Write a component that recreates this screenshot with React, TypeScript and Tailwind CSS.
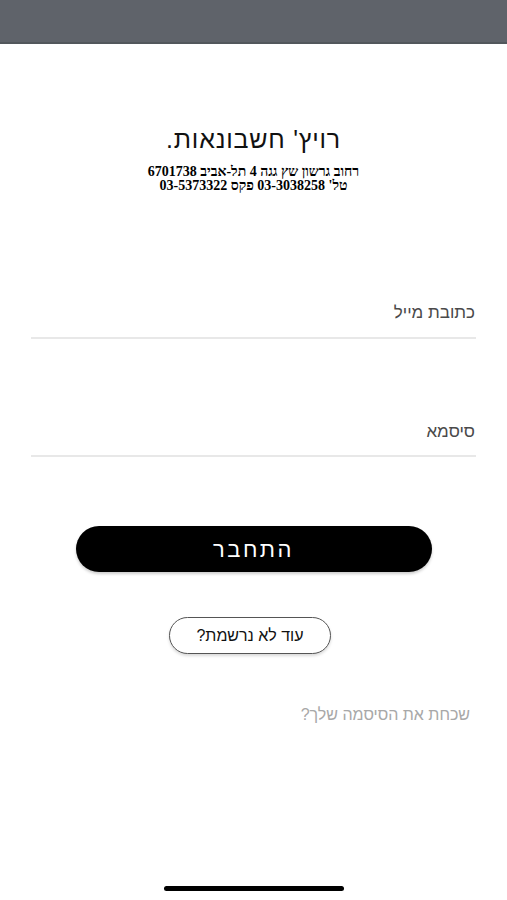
export default function App() {
  return (
    <div dir="rtl" className="w-[507px] h-[900px] bg-white flex flex-col font-['Liberation_Sans',Arial,sans-serif] overflow-hidden">
      {/* status bar */}
      <div className="h-[44px] shrink-0 bg-[#5f636a] border-b-2 border-[#52575c]" />

      {/* logo block */}
      <div className="flex flex-col items-center mt-[80px]">
        <h1 className="text-[25px] leading-[30px] text-[#111] tracking-[0.8px]">רויץ' חשבונאות.</h1>
        <div className="mt-[11px] flex flex-col items-center text-[14px] leading-[14px] font-bold text-black font-['Liberation_Serif','Times_New_Roman',serif]">
          <span>רחוב גרשון שץ גגה 4 תל-אביב 6701738</span>
          <span>טל' 03-3038258 פקס 03-5373322</span>
        </div>
      </div>

      {/* fields */}
      <div className="mt-[110px] px-[31px] flex flex-col">
        <div className="flex flex-col">
          <label className="text-[17px] leading-[20px] text-[#4a4a4a] pr-[1px]">כתובת מייל</label>
          <div className="mt-[14px] h-[2px] bg-[#e8e8e8]" />
        </div>
        <div className="flex flex-col mt-[83px]">
          <label className="text-[17px] leading-[20px] text-[#4a4a4a] pr-[1px]">סיסמא</label>
          <div className="mt-[13px] h-[2px] bg-[#e8e8e8]" />
        </div>
      </div>

      {/* actions */}
      <div className="flex flex-col items-center mt-[69px]">
        <button className="w-[356px] h-[46px] rounded-full bg-black text-white text-[22px] tracking-[2.5px] shadow-[0_2px_3px_rgba(0,0,0,0.2)]">
          התחבר
        </button>
        <button className="mt-[45px] mr-[7px] w-[162px] h-[37px] rounded-full bg-white border border-[#555] text-[16px] text-[#111] shadow-[0_2px_3px_rgba(0,0,0,0.15)]">
          עוד לא נרשמת?
        </button>
      </div>

      <div className="mt-[52px] pr-[37px] text-[16px] leading-[18px] text-[#a8a8a8]">
        שכחת את הסיסמה שלך?
      </div>

      <div className="flex-1" />
      <div className="flex justify-center pb-[9px]">
        <div className="w-[180px] h-[5px] rounded-full bg-black" />
      </div>
    </div>
  );
}
